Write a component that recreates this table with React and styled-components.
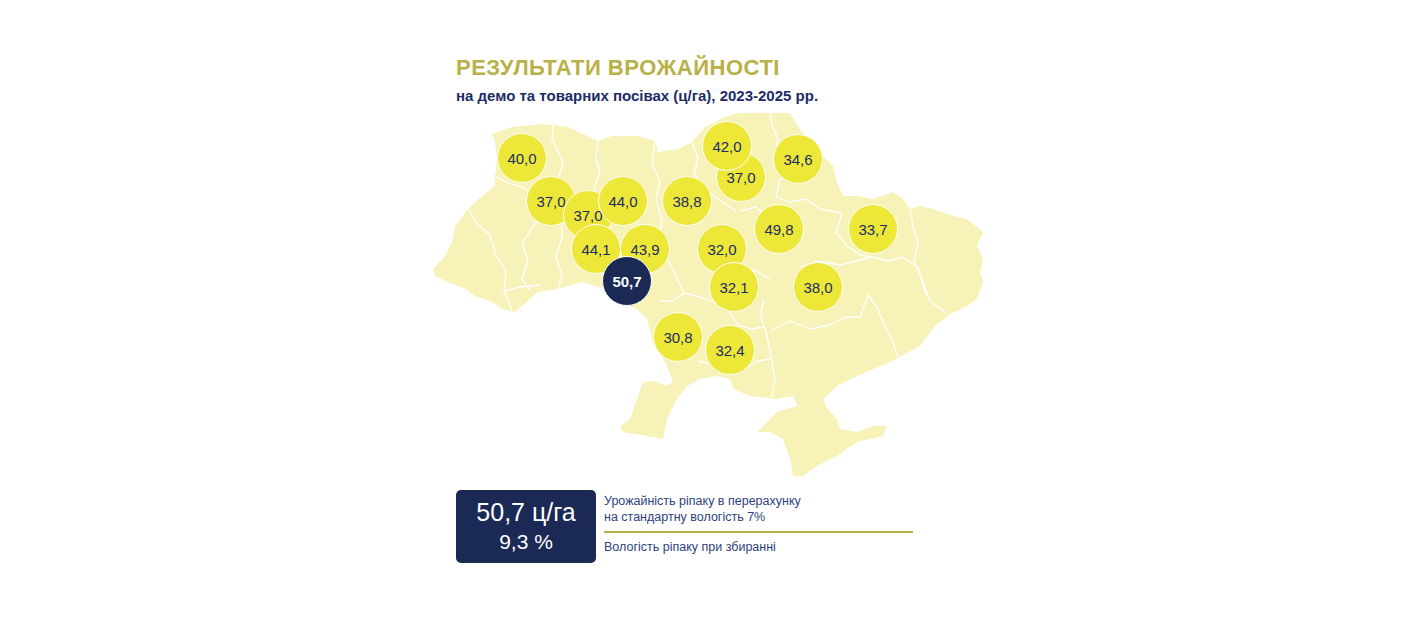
import React from 'react'
import styled, { createGlobalStyle } from 'styled-components'

const GlobalStyle = createGlobalStyle`
  body {
    margin: 0;
    background: #ffffff;
    font-family: "Liberation Sans", Arial, sans-serif;
  }
`

const Page = styled.div`
  display: flex;
  justify-content: center;
  padding-top: 55px;
`

const Card = styled.div`
  width: 560px;
  display: flex;
  flex-direction: column;
`

const Header = styled.div`
  padding-left: 28px;
`

const Title = styled.h1`
  margin: 0;
  color: #b9b148;
  font-size: 22px;
  font-weight: 700;
  letter-spacing: 0.5px;
  line-height: 26px;
`

const Subtitle = styled.p`
  margin: 6px 0 0;
  color: #1c2d66;
  font-size: 15px;
  font-weight: 700;
  line-height: 18px;
`

const MapWrap = styled.div`
  position: relative;
  width: 560px;
  height: 370px;
  margin-top: 8px;

  svg {
    display: block;
  }
`

const Pin = styled.div`
  position: absolute;
  width: 50px;
  height: 50px;
  box-sizing: border-box;
  border-radius: 50%;
  border: 1.5px solid #ffffff;
  background: ${p => (p.$dark ? '#1b2955' : '#ede737')};
  color: ${p => (p.$dark ? '#ffffff' : '#1c2d66')};
  font-size: 15px;
  font-weight: ${p => (p.$dark ? 700 : 400)};
  display: flex;
  align-items: center;
  justify-content: center;
`

const Legend = styled.div`
  display: flex;
  gap: 8px;
  padding-left: 28px;
  margin-top: 7px;
`

const ValueBox = styled.div`
  width: 140px;
  height: 73px;
  border-radius: 5px;
  background: #1b2955;
  color: #ffffff;
  display: flex;
  flex-direction: column;
  align-items: center;
  justify-content: center;
`

const BigValue = styled.div`
  font-size: 25px;
  line-height: 30px;
`

const SmallValue = styled.div`
  font-size: 21px;
  line-height: 30px;
`

const Notes = styled.div`
  width: 309px;
  display: flex;
  flex-direction: column;
  padding-top: 3px;
`

const Note = styled.div`
  color: #2e3f7e;
  font-size: 12.5px;
  line-height: 16px;
`

const Divider = styled.div`
  height: 2px;
  background: #b9b148;
  margin: 6px 0 6px;
`

const OX = 428
const OY = 114

const outline = [
  [492, 135], [512, 128], [542, 125], [552, 126], [568, 128], [585, 136], [598, 142],
  [612, 137], [638, 137], [655, 142], [658, 153], [678, 150], [692, 143], [705, 128],
  [725, 118], [743, 113], [770, 110], [788, 112], [800, 130], [813, 147], [833, 167],
  [837, 183], [843, 197], [857, 197], [873, 200], [893, 193], [903, 200], [910, 210],
  [920, 207], [933, 210], [953, 217], [967, 220], [983, 233], [977, 247], [983, 260],
  [980, 273], [983, 283], [977, 300], [967, 307], [950, 315], [935, 327], [920, 347],
  [890, 363], [857, 377], [837, 387], [823, 400],
  [826, 408], [837, 420], [840, 430], [857, 433], [873, 427], [887, 427], [883, 437],
  [857, 443], [837, 457], [817, 467], [803, 477], [793, 477], [790, 460], [783, 440],
  [770, 433], [757, 433], [763, 427], [777, 413], [797, 407], [793, 397],
  [777, 400], [750, 397], [733, 390], [730, 380], [717, 377], [700, 380], [687, 387],
  [677, 400], [667, 420], [663, 440], [647, 437], [623, 433], [620, 427], [630, 420],
  [637, 400], [643, 383], [653, 382], [667, 387], [673, 383], [667, 367], [653, 343],
  [647, 320], [637, 310], [625, 305], [605, 290], [582, 283], [558, 290], [538, 293],
  [515, 313], [502, 310], [492, 303], [475, 297], [465, 290], [448, 283], [435, 277],
  [433, 270], [445, 257], [452, 243], [455, 227], [468, 210], [482, 197], [495, 187],
  [495, 177], [497, 160], [495, 143]
]

const borders = [
  [[553, 126], [552, 140], [558, 152], [563, 164], [558, 180], [562, 200], [560, 215]],
  [[598, 142], [596, 160], [600, 172], [594, 190], [596, 210], [592, 232]],
  [[655, 142], [652, 165], [660, 182], [656, 200], [662, 222], [658, 242]],
  [[692, 143], [698, 160], [694, 175], [705, 190], [718, 200], [736, 212]],
  [[770, 110], [772, 126], [778, 140], [774, 160], [781, 178], [776, 198], [790, 203]],
  [[790, 203], [806, 200], [820, 210], [842, 214]],
  [[910, 210], [913, 228], [918, 245], [914, 262], [922, 280], [930, 302]],
  [[872, 258], [888, 262], [902, 258], [918, 268]],
  [[740, 212], [756, 208], [766, 218], [762, 232]],
  [[492, 176], [508, 184], [522, 188], [540, 200], [548, 212]],
  [[548, 212], [534, 226], [522, 244], [528, 262], [522, 280], [530, 292]],
  [[468, 210], [478, 226], [490, 236], [496, 256], [506, 272], [504, 292], [512, 312]],
  [[504, 292], [520, 288], [540, 286]],
  [[562, 215], [562, 238], [556, 258], [562, 276], [558, 290]],
  [[598, 235], [604, 252], [600, 270], [606, 288]],
  [[658, 242], [668, 260], [676, 278], [684, 294], [672, 302], [660, 302]],
  [[684, 294], [700, 298], [716, 304], [722, 298]],
  [[700, 246], [712, 256], [722, 258], [740, 268], [756, 272], [770, 280]],
  [[722, 298], [730, 314], [738, 326], [752, 330], [764, 328]],
  [[764, 300], [760, 316], [766, 332], [770, 352], [775, 380], [772, 398]],
  [[698, 362], [716, 366], [740, 372], [758, 362], [770, 360]],
  [[770, 332], [790, 322], [810, 330], [830, 326], [846, 318], [860, 318]],
  [[800, 268], [818, 262], [840, 266], [856, 262], [872, 258]],
  [[860, 318], [868, 296], [878, 310], [884, 326], [892, 340], [898, 358]],
  [[842, 214], [836, 234], [848, 248], [860, 256], [872, 258]],
  [[918, 268], [924, 290], [930, 302], [946, 314]]
]

const pins = [
  { v: '40,0', x: 522, y: 159 },
  { v: '37,0', x: 551, y: 202 },
  { v: '37,0', x: 588, y: 216 },
  { v: '44,0', x: 623, y: 202 },
  { v: '38,8', x: 687, y: 202 },
  { v: '37,0', x: 741, y: 178 },
  { v: '42,0', x: 727, y: 147 },
  { v: '34,6', x: 798, y: 160 },
  { v: '49,8', x: 779, y: 230 },
  { v: '33,7', x: 873, y: 230 },
  { v: '32,0', x: 722, y: 250 },
  { v: '44,1', x: 596, y: 250 },
  { v: '43,9', x: 645, y: 250 },
  { v: '50,7', x: 627, y: 282, dark: true },
  { v: '32,1', x: 734, y: 288 },
  { v: '38,0', x: 818, y: 288 },
  { v: '30,8', x: 678, y: 338 },
  { v: '32,4', x: 730, y: 351 }
]

const toPoints = pts => pts.map(p => p.join(',')).join(' ')

const UkraineMap = () => (
  <svg width="560" height="370" viewBox={`${OX} ${OY} 560 370`}>
    <polygon points={toPoints(outline)} fill="#f6f2b8" />
    {borders.map((b, i) => (
      <polyline
        key={i}
        points={toPoints(b)}
        fill="none"
        stroke="#ffffff"
        strokeWidth="1.3"
        strokeLinejoin="round"
      />
    ))}
  </svg>
)

export default function App() {
  return (
    <>
      <GlobalStyle />
      <Page>
        <Card>
          <Header>
            <Title>РЕЗУЛЬТАТИ ВРОЖАЙНОСТІ</Title>
            <Subtitle>на демо та товарних посівах (ц/га), 2023-2025 рр.</Subtitle>
          </Header>
          <MapWrap>
            <UkraineMap />
            {pins.map((p, i) => (
              <Pin
                key={i}
                $dark={p.dark}
                style={{ left: p.x - OX - 25, top: p.y - OY - 25 }}
              >
                {p.v}
              </Pin>
            ))}
          </MapWrap>
          <Legend>
            <ValueBox>
              <BigValue>50,7 ц/га</BigValue>
              <SmallValue>9,3 %</SmallValue>
            </ValueBox>
            <Notes>
              <Note>Урожайність ріпаку в перерахунку</Note>
              <Note>на стандартну вологість 7%</Note>
              <Divider />
              <Note>Вологість ріпаку при збиранні</Note>
            </Notes>
          </Legend>
        </Card>
      </Page>
    </>
  )
}
